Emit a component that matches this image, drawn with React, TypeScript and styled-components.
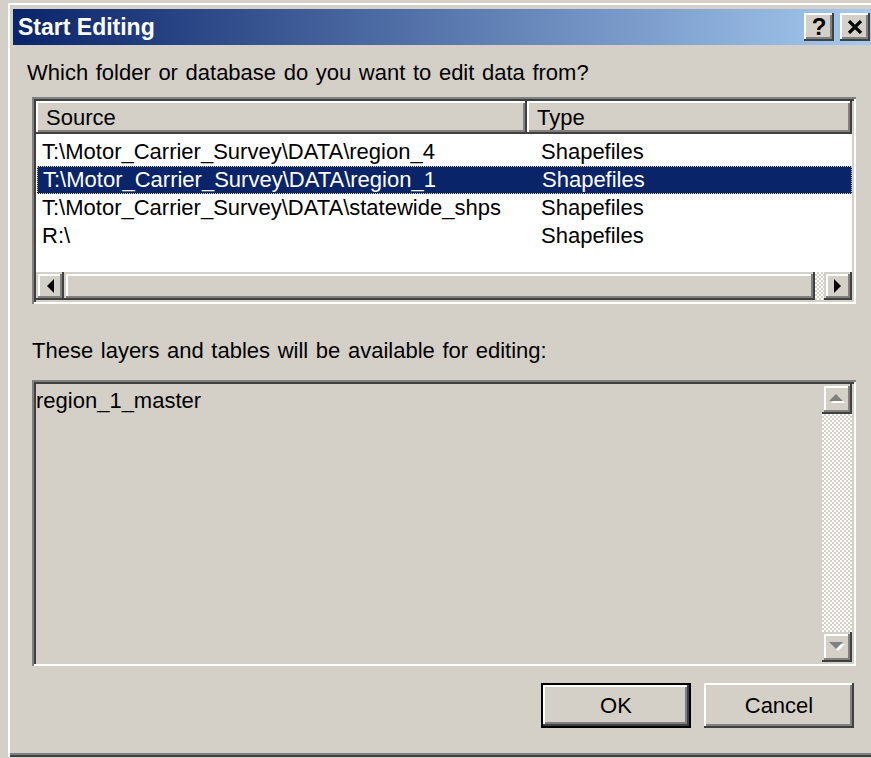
import React from 'react';
import styled, { createGlobalStyle, css } from 'styled-components';

const face = '#D4D0C8';
const shadow = '#808080';
const dark = '#404040';
const light = '#FFFFFF';
const navy = '#0A246A';

const GlobalStyle = createGlobalStyle`
    html, body {
        margin: 0;
        padding: 0;
        background: ${face};
        overflow: hidden;
    }
    body {
        font-family: "Liberation Sans", Arial, sans-serif;
        font-size: 22px;
        word-spacing: 1.5px;
        color: #000;
    }
`

// classic 3D edges, every line doubled
const raised = css`
    box-shadow:
        inset -2px -2px ${dark},
        inset 2px 2px ${light},
        inset -4px -4px ${shadow};
`

const frame = css`
    box-shadow:
        inset -2px -2px ${dark},
        inset 2px 2px ${face},
        inset -4px -4px ${shadow},
        inset 4px 4px ${light};
`

const sunken = css`
    box-shadow:
        inset 2px 2px ${shadow},
        inset -2px -2px ${light},
        inset 4px 4px ${dark},
        inset -4px -4px ${face};
`

const dither = css`
    background-color: ${light};
    background-image: repeating-conic-gradient(${face} 0 25%, ${light} 0 50%);
    background-size: 4px 4px;
`

const Window = styled.div`
    margin: 3px 0 0 8px;
    width: 870px;
    height: 754px;
    box-sizing: border-box;
    padding: 6px 0 0 5px;
    background: ${face};
    box-shadow:
        inset 2px 2px ${light},
        inset -2px -2px ${dark},
        inset -4px -4px ${shadow};
    display: flex;
    flex-direction: column;
`

const TitleBar = styled.div`
    height: 36px;
    margin-right: 5px;
    padding: 0 3px 0 5px;
    display: flex;
    align-items: center;
    background: linear-gradient(to right, ${navy}, #A6CAF0);
`

const Title = styled.span`
    flex: 1;
    color: #fff;
    font-weight: bold;
    font-size: 23px;
    word-spacing: 0;
    white-space: nowrap;
`

const CaptionButton = styled.button`
    width: 30px;
    height: 28px;
    margin-left: 6px;
    padding: 0;
    border: none;
    background: ${face};
    ${raised};
    display: flex;
    align-items: center;
    justify-content: center;
    font-family: "Liberation Sans", Arial, sans-serif;
    font-weight: bold;
    font-size: 24px;
    color: #000;
`

const Body = styled.div`
    display: flex;
    flex-direction: column;
    align-items: flex-start;
`

const Label = styled.div<{ $indent: number; $top: number }>`
    margin: ${p => p.$top}px 0 0 ${p => p.$indent}px;
    line-height: 24px;
    white-space: nowrap;
`

const ListBox = styled.div<{ $height: number; $top: number; $bg?: string }>`
    margin: ${p => p.$top}px 0 0 19px;
    width: 824px;
    height: ${p => p.$height}px;
    box-sizing: border-box;
    padding: 4px;
    background: ${p => p.$bg || light};
    ${sunken};
    display: flex;
`

const Table = styled.div`
    flex: 1;
    display: flex;
    flex-direction: column;
    min-width: 0;
`

const HeaderRow = styled.div`
    height: 33px;
    display: grid;
    grid-template-columns: 491px 1fr;
`

const HeaderCell = styled.div`
    background: ${face};
    ${raised};
    padding-left: 10px;
    line-height: 33px;
`

const Rows = styled.div`
    flex: 1;
    padding-top: 4px;
`

const Row = styled.div<{ $selected?: boolean }>`
    height: 28px;
    line-height: 28px;
    display: grid;
    grid-template-columns: 491px 1fr;
    white-space: nowrap;
    background: ${p => (p.$selected ? navy : 'transparent')};
    color: ${p => (p.$selected ? '#fff' : '#000')};
    outline: ${p => (p.$selected ? '1px dotted #E6D28C' : 'none')};
    outline-offset: -1px;
    margin-left: ${p => (p.$selected ? '1px' : '0')};
`

const Cell = styled.span<{ $pad: number }>`
    padding-left: ${p => p.$pad}px;
    overflow: hidden;
`

const HScroll = styled.div`
    height: 28px;
    display: flex;
`

const VScroll = styled.div`
    width: 30px;
    display: flex;
    flex-direction: column;
`

const ScrollButton = styled.div<{ $w: number; $h: number }>`
    width: ${p => p.$w}px;
    height: ${p => p.$h}px;
    flex: none;
    background: ${face};
    ${frame};
    display: flex;
    align-items: center;
    justify-content: center;
`

const Thumb = styled.div`
    flex: 1;
    background: ${face};
    ${frame};
`

const Track = styled.div<{ $size?: number }>`
    ${dither};
    flex: ${p => (p.$size ? `0 0 ${p.$size}px` : '1')};
`

const Layers = styled.div`
    flex: 1;
    padding-top: 5px;
    line-height: 24px;
`

const ButtonRow = styled.div`
    margin: 17px 0 0 19px;
    width: 824px;
    box-sizing: border-box;
    padding-right: 2px;
    display: flex;
    justify-content: flex-end;
    gap: 13px;
`

const DialogButton = styled.button<{ $default?: boolean }>`
    width: 150px;
    height: 45px;
    border: none;
    padding: 0;
    background: ${face};
    font-family: "Liberation Sans", Arial, sans-serif;
    font-size: 22px;
    color: #000;
    ${p =>
        p.$default
            ? css`
                  box-shadow:
                      inset 0 0 0 2px #000,
                      inset -4px -4px ${dark},
                      inset 4px 4px ${light},
                      inset -6px -6px ${shadow};
              `
            : raised};
`

const Arrow = ({ dir, disabled }: { dir: 'left' | 'right' | 'up' | 'down'; disabled?: boolean }) => {
    if (dir === 'left' || dir === 'right') {
        const pts = dir === 'left' ? '8,0 8,14 1,7' : '0,0 0,14 7,7';
        return (
            <svg width="9" height="14" viewBox="0 0 9 14">
                <polygon points={pts} fill="#000" />
            </svg>
        );
    }
    const pts = dir === 'up' ? '1,8 15,8 8,1' : '1,1 15,1 8,8';
    return (
        <svg width="18" height="12" viewBox="0 0 18 12">
            {disabled && <polygon points={pts} fill={light} transform="translate(2 2)" />}
            <polygon points={pts} fill={disabled ? shadow : '#000'} />
        </svg>
    );
};

const sources = [
    { path: 'T:\\Motor_Carrier_Survey\\DATA\\region_4', type: 'Shapefiles' },
    { path: 'T:\\Motor_Carrier_Survey\\DATA\\region_1', type: 'Shapefiles', selected: true },
    { path: 'T:\\Motor_Carrier_Survey\\DATA\\statewide_shps', type: 'Shapefiles' },
    { path: 'R:\\', type: 'Shapefiles' },
];

export default function App() {
    return (
        <>
            <GlobalStyle />
            <Window>
                <TitleBar>
                    <Title>Start Editing</Title>
                    <CaptionButton>?</CaptionButton>
                    <CaptionButton>
                        <svg width="16" height="14" viewBox="0 0 16 14">
                            <path d="M2 1 L14 13 M14 1 L2 13" stroke="#000" strokeWidth="3.2" />
                        </svg>
                    </CaptionButton>
                </TitleBar>
                <Body>
                    <Label $indent={14} $top={16}>
                        Which folder or database do you want to edit data from?
                    </Label>
                    <ListBox $height={207} $top={12}>
                        <Table>
                            <HeaderRow>
                                <HeaderCell>Source</HeaderCell>
                                <HeaderCell>Type</HeaderCell>
                            </HeaderRow>
                            <Rows>
                                {sources.map(s => (
                                    <Row key={s.path} $selected={s.selected}>
                                        <Cell $pad={6}>{s.path}</Cell>
                                        <Cell $pad={14}>{s.type}</Cell>
                                    </Row>
                                ))}
                            </Rows>
                            <HScroll>
                                <ScrollButton $w={28} $h={28}>
                                    <Arrow dir="left" />
                                </ScrollButton>
                                <Thumb />
                                <Track $size={9} />
                                <ScrollButton $w={28} $h={28}>
                                    <Arrow dir="right" />
                                </ScrollButton>
                            </HScroll>
                        </Table>
                    </ListBox>
                    <Label $indent={19} $top={35}>
                        These layers and tables will be available for editing:
                    </Label>
                    <ListBox $height={286} $top={17} $bg={face}>
                        <Layers>region_1_master</Layers>
                        <VScroll>
                            <ScrollButton $w={30} $h={30}>
                                <Arrow dir="up" disabled />
                            </ScrollButton>
                            <Track />
                            <ScrollButton $w={30} $h={30}>
                                <Arrow dir="down" disabled />
                            </ScrollButton>
                        </VScroll>
                    </ListBox>
                    <ButtonRow>
                        <DialogButton $default>OK</DialogButton>
                        <DialogButton>Cancel</DialogButton>
                    </ButtonRow>
                </Body>
            </Window>
        </>
    );
}
